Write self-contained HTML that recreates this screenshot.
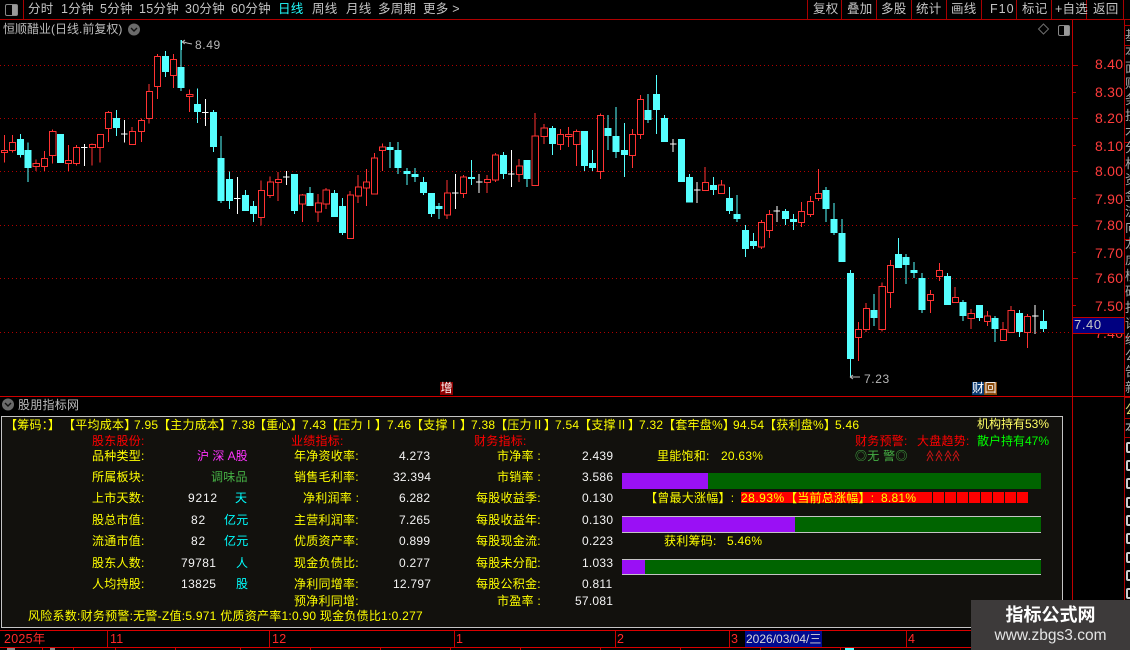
<!DOCTYPE html>
<html lang="zh"><head><meta charset="utf-8"><title>恒顺醋业</title>
<style>
html,body{margin:0;padding:0;background:#000;width:1130px;height:650px;overflow:hidden}
#r{position:relative;width:1130px;height:650px;overflow:hidden;background:#000;font:12px/14px "Liberation Sans","WenQuanYi Zen Hei","Noto Sans CJK SC",sans-serif;color:#c0c0c0}
.t{position:absolute;white-space:nowrap;height:14px;line-height:14px;letter-spacing:.25px}
.b{position:absolute}
.y{color:#ffff00}.red{color:#ff0000}.w{color:#f4f4f4}.c{color:#00ffff}.p{color:#ff33ff}.g{color:#45b045}.pr{color:#ff3c3c;font-size:14px}
.tb{color:#c4c4c4;font-size:12.5px}
.d{position:absolute;left:0;width:1072px;height:1px;background:repeating-linear-gradient(90deg,#b00000 0 1px,transparent 1px 4px)}
.sep{position:absolute;top:0;width:1px;height:19px;background:#a80000}
.tk{position:absolute;left:1073px;height:1px;background:#b00000}
.o{position:absolute;left:1126px;width:7px;height:7px;border:2px solid #ccc;border-radius:2px}
.hl{position:absolute;left:1124px;width:6px;height:1px;background:#b00000}
.vt{position:absolute;width:1px;background:#c80000}
</style></head><body><div id="r">

<!-- grid -->
<div class="d" style="top:65px"></div><div class="d" style="top:118px"></div><div class="d" style="top:171px"></div><div class="d" style="top:225px"></div><div class="d" style="top:278px"></div><div class="d" style="top:332px"></div>

<svg class="b" style="left:0;top:0" width="1130" height="650" viewBox="0 0 3136 1950" preserveAspectRatio="none" shape-rendering="crispEdges">
<g fill="none">
<g id="lw">
<path vector-effect="non-scaling-stroke" stroke="#ff3232" stroke-width="1" d="M12 405V488M34 405V458M100 478V513M123 453V513M146 388V490M190 435V513M212 435V497M256 430V497M278 403V488M301 333V426M367 381V434M392 356V426M414 252V370M437 162V297M481 162V264M526 268V336M725 541V676M750 530V594M772 516V603M839 582V666M883 582V666M905 564V627M972 573V716M994 525V609M1017 507V618M1039 459V582M1061 430V513M1241 540V657M1286 525V594M1352 525V579M1375 459V546M1441 477V546M1485 339V557M1510 372V432M1555 387V450"/>
<path vector-effect="non-scaling-stroke" stroke="#ff3232" stroke-width="1" fill="#000" d="M12 451m-8 0h17V458h-17zM34 427m-8 0h17V452h-17zM100 490m-8 0h17V500h-17zM123 475m-8 0h17V500h-17zM146 394m-8 0h17V467h-17zM190 481m-8 0h17V491h-17zM212 442m-8 0h17V491h-17zM256 433m-8 0h17V442h-17zM278 403m-8 0h17V443h-17zM301 337m-8 0h17V386h-17zM367 394m-8 0h17V434h-17zM392 361m-8 0h17V395h-17zM414 274m-8 0h17V356h-17zM437 169m-8 0h17V260h-17zM481 178m-8 0h17V227h-17zM526 283m-8 0h17V290h-17zM725 571m-8 0h17V653h-17zM750 546m-8 0h17V587h-17zM772 538m-8 0h17V548h-17zM839 585m-8 0h17V612h-17zM883 609m-8 0h17V636h-17zM905 570m-8 0h17V612h-17zM972 585m-8 0h17V716h-17zM994 561m-8 0h17V588h-17zM1017 546m-8 0h17V564h-17zM1039 474m-8 0h17V582h-17zM1061 441m-8 0h17V452h-17zM1241 579m-8 0h17V645h-17zM1286 531m-8 0h17V581h-17zM1352 538m-8 0h17V548h-17zM1375 465m-8 0h17V540h-17zM1441 498m-8 0h17V524h-17zM1485 408m-8 0h17V557h-17zM1510 384m-8 0h17V410h-17zM1555 403m-8 0h17V434h-17z"/>
<path vector-effect="non-scaling-stroke" stroke="#55ffff" stroke-width="1" d="M57 402V472M78 427V546M168 402V489M323 330V408M459 153V231M503 120V273M548 265V369M592 330V456M614 408V609M637 514V627M681 570V633M703 603V666M817 522V642M861 561V618M928 570V651M950 594V705M1083 426V504M1105 426V522M1130 504V555M1152 504V546M1175 531V585M1197 579V651M1219 609V657M1308 480V555M1397 456V537M1463 480V561M1533 378V465"/>
<path vector-effect="non-scaling-stroke" stroke="#55ffff" stroke-width="7" d="M57 417V465M78 450V504M168 402V489M323 354V384M459 168V216M503 201V264M548 312V336M592 336V441M614 474V603M637 537V603M681 585V633M703 618V642M817 522V633M861 579V618M928 579V651M950 618V699M1083 441V450M1105 450V504M1130 513V522M1152 522V531M1175 546V579M1197 579V642M1219 618V627M1308 531V537M1397 465V522M1463 480V537M1533 384V432"/>
<path vector-effect="non-scaling-stroke" stroke="#fff" stroke-width="1" d="M234 432V498M234 442m-9 0h18M345 360V427M345 402m-9 0h18M570 297V378M570 338m-9 0h18M659 531V642M659 595m-9 0h18M795 513V555M795 531m-9 0h18M1264 522V627M1264 579m-9 0h18M1330 522V579M1330 546m-9 0h18M1419 450V561M1419 522m-9 0h18"/>
</g>
<g transform="translate(1568 0)">
<path vector-effect="non-scaling-stroke" stroke="#ff3232" stroke-width="1" d="M10 381V441M32 388V498M98 340V537M187 387V504M209 285V417M389 501V572M434 540V581M545 660V747M567 630V714M656 606V681M681 588V651M703 507V603M814 966V1083M836 909V996M880 847V995M903 780V924M1014 870V939M1039 789V843M1083 861V908M1127 927V987M1172 933V978M1216 966V1022M1238 918V998M1283 942V1044"/>
<path vector-effect="non-scaling-stroke" stroke="#ff3232" stroke-width="1" fill="#000" d="M10 403m-8 0h17V410h-17zM32 394m-8 0h17V434h-17zM98 346m-8 0h17V515h-17zM187 403m-8 0h17V467h-17zM209 298m-8 0h17V404h-17zM389 547m-8 0h17V572h-17zM434 555m-8 0h17V581h-17zM545 667m-8 0h17V741h-17zM567 643m-8 0h17V692h-17zM656 634m-8 0h17V668h-17zM681 604m-8 0h17V644h-17zM703 580m-8 0h17V596h-17zM814 988m-8 0h17V1012h-17zM836 925m-8 0h17V989h-17zM880 859m-8 0h17V989h-17zM903 796m-8 0h17V878h-17zM1014 883m-8 0h17V902h-17zM1039 811m-8 0h17V830h-17zM1083 892m-8 0h17V908h-17zM1127 940m-8 0h17V955h-17zM1172 948m-8 0h17V965h-17zM1216 988m-8 0h17V1022h-17zM1238 931m-8 0h17V998h-17zM1283 949m-8 0h17V998h-17z"/>
<path vector-effect="non-scaling-stroke" stroke="#55ffff" stroke-width="1" d="M54 393V513M76 450V513M120 345V450M142 321V474M165 369V531M231 282V369M254 225V402M276 345V426M323 417V546M345 522V608M412 531V585M456 561V642M478 585V666M501 675V771M523 699V747M612 627V675M634 642V690M725 561V666M747 609V705M769 657V786M792 810V1130M858 882V978M925 714V804M947 762V852M969 786V834M991 819V939M1061 819V915M1105 900V963M1150 915V963M1194 948V1026M1261 930V1011M1328 930V996"/>
<path vector-effect="non-scaling-stroke" stroke="#55ffff" stroke-width="7" d="M54 393V498M76 489V504M120 384V408M142 408V456M165 450V465M231 330V360M254 282V330M276 354V426M323 417V546M345 531V608M412 555V570M456 594V633M478 642V657M501 690V747M523 723V738M612 633V657M634 657V666M725 570V627M747 657V699M769 699V786M792 819V1077M858 930V954M925 762V804M947 771V795M969 810V819M991 834V930M1061 828V915M1105 906V948M1150 915V954M1194 954V987M1261 939V996M1328 963V987"/>
<path vector-effect="non-scaling-stroke" stroke="#fff" stroke-width="1" d="M300 417V456M300 432m-9 0h18M367 546V609M367 570m-9 0h18M588 618V666M588 633m-9 0h18M1305 915V1002M1305 948m-9 0h18"/>
</g>
</g>
</svg>

<!-- toolbar -->
<div class="b" style="left:0;top:19px;width:1130px;height:1px;background:#b00000"></div>
<div class="sep" style="left:23px"></div>
<div class="b" style="left:5px;top:4px;width:11px;height:10px;border:1px solid #888;border-radius:2px;background:linear-gradient(90deg,#000 0 6px,#999 6px)"></div>
<span class="t tb" style="left:28px;top:2px">分时</span>
<span class="t tb" style="left:61px;top:2px">1分钟</span>
<span class="t tb" style="left:100px;top:2px">5分钟</span>
<span class="t tb" style="left:139px;top:2px">15分钟</span>
<span class="t tb" style="left:185px;top:2px">30分钟</span>
<span class="t tb" style="left:231px;top:2px">60分钟</span>
<span class="t tb" style="left:278px;top:2px;color:#22ffff">日线</span>
<span class="t tb" style="left:312px;top:2px">周线</span>
<span class="t tb" style="left:346px;top:2px">月线</span>
<span class="t tb" style="left:378px;top:2px">多周期</span>
<span class="t tb" style="left:423px;top:2px">更多 &gt;</span>
<div class="sep" style="left:807px"></div><div class="sep" style="left:841px"></div><div class="sep" style="left:876px"></div><div class="sep" style="left:911px"></div><div class="sep" style="left:946px"></div><div class="sep" style="left:981px"></div><div class="sep" style="left:1016px"></div><div class="sep" style="left:1051px"></div><div class="sep" style="left:1086px"></div><div class="sep" style="left:1123px"></div>
<span class="t tb" style="left:813px;top:2px">复权</span>
<span class="t tb" style="left:847px;top:2px">叠加</span>
<span class="t tb" style="left:881px;top:2px">多股</span>
<span class="t tb" style="left:916px;top:2px">统计</span>
<span class="t tb" style="left:951px;top:2px">画线</span>
<span class="t tb" style="left:990px;top:2px;letter-spacing:1px">F10</span>
<span class="t tb" style="left:1022px;top:2px">标记</span>
<span class="t tb" style="left:1055px;top:2px">+自选</span>
<span class="t tb" style="left:1093px;top:2px">返回</span>

<!-- title -->
<span class="t" style="left:3px;top:22px;color:#bcbcbc;letter-spacing:0">恒顺醋业(日线.前复权)</span>
<svg class="b" style="left:127px;top:23px" width="14" height="14"><circle cx="7" cy="6.5" r="6" fill="#6a6a6a"/><path d="M4 5l3 3 3-3" stroke="#111" stroke-width="1.4" fill="none"/></svg>
<svg class="b" style="left:1037px;top:22px" width="14" height="14"><path d="M6.5 2l5 5-5 5-5-5z" stroke="#6e6e6e" fill="none"/></svg>
<div class="b" style="left:1058px;top:25px;width:10px;height:9px;border:1px solid #888;border-radius:2px;background:linear-gradient(90deg,#000 0 5px,#999 5px)"></div>

<!-- hi/lo markers -->
<svg class="b" style="left:178px;top:36px" width="20" height="14"><path d="M4 6l3-2M4 6l3 2M4 6h2l3 1 5 1" stroke="#bbb" fill="none"/><path d="M3.500 4V14" stroke="#55ffff"/></svg>
<span class="t" style="left:195px;top:38px;color:#b8b8b8;letter-spacing:.6px">8.49</span>
<svg class="b" style="left:848px;top:372px" width="16" height="10"><path d="M2 5h10M2 5l3-2M2 5l3 2" stroke="#bbb" fill="none"/></svg>
<span class="t" style="left:864px;top:372px;color:#b8b8b8;letter-spacing:.6px">7.23</span>

<span class="b" style="left:440px;top:382px;width:13px;height:13px;background:#8c0000;color:#fff;font-size:12px;line-height:13px;text-align:center">增</span>
<span class="b" style="left:972px;top:382px;width:12px;height:13px;background:#0a3a70;color:#fff;font-size:12px;line-height:13px;text-align:center">财</span>
<span class="b" style="left:984px;top:382px;width:13px;height:13px;background:#8a4a0a;color:#fff;font-size:12px;line-height:13px;text-align:center">回</span>

<!-- axis -->
<div class="b" style="left:1072px;top:20px;width:1px;height:630px;background:#c00000"></div>
<div class="b" style="left:1124px;top:20px;width:1px;height:630px;background:#b00000"></div>
<div class="tk" style="top:65px;width:5px"></div><div class="tk" style="top:92px;width:3px"></div><div class="tk" style="top:118px;width:5px"></div><div class="tk" style="top:145px;width:3px"></div><div class="tk" style="top:171px;width:5px"></div><div class="tk" style="top:198px;width:3px"></div><div class="tk" style="top:225px;width:5px"></div><div class="tk" style="top:252px;width:3px"></div><div class="tk" style="top:278px;width:5px"></div><div class="tk" style="top:305px;width:3px"></div>
<span class="t pr" style="left:1095px;top:57px">8.40</span>
<span class="t pr" style="left:1095px;top:85px">8.30</span>
<span class="t pr" style="left:1095px;top:111px">8.20</span>
<span class="t pr" style="left:1095px;top:139px">8.10</span>
<span class="t pr" style="left:1095px;top:164px">8.00</span>
<span class="t pr" style="left:1095px;top:192px">7.90</span>
<span class="t pr" style="left:1095px;top:218px">7.80</span>
<span class="t pr" style="left:1095px;top:246px">7.70</span>
<span class="t pr" style="left:1095px;top:271px">7.60</span>
<span class="t pr" style="left:1095px;top:299px">7.50</span>
<span class="t pr" style="left:1095px;top:326px">7.40</span>
<div class="b" style="left:1073px;top:317px;width:51px;height:15px;background:#000080;border-top:1px solid #c00000;border-bottom:1px solid #c00000"></div>
<span class="t" style="left:1074px;top:318px;color:#c8c8c8;font-size:13px;letter-spacing:.6px">7.40</span>

<!-- right strip -->
<div class="hl" style="top:25px"></div><div class="hl" style="top:45px"></div><div class="hl" style="top:142px"></div><div class="hl" style="top:239px"></div><div class="hl" style="top:336px"></div><div class="hl" style="top:397px"></div><div class="hl" style="top:418px"></div><div class="hl" style="top:437px"></div>
<div class="b" style="left:1125px;top:28px;width:5px;height:368px;overflow:hidden;color:#a8a8a8;font-size:13px;line-height:16px;white-space:pre-line">基
本
面
财
务
技
术
分
析
资
金
流
向
龙
虎
榜
研
报
评
级
公
告
新
闻
股
东
分
红</div>
<span class="b" style="left:1125px;top:403px;width:5px;height:14px;overflow:hidden;color:#e0e070;font-size:13px;line-height:14px">公</span>
<span class="b" style="left:1125px;top:420px;width:5px;height:16px;overflow:hidden;color:#c8c8c8;font-size:13px;line-height:16px">本</span>
<div class="o" style="top:442px"></div><div class="o" style="top:460px"></div><div class="o" style="top:478px"></div><div class="o" style="top:497px"></div><div class="o" style="top:515px"></div><div class="o" style="top:533px"></div><div class="o" style="top:552px"></div><div class="o" style="top:570px"></div><div class="o" style="top:588px"></div>

<!-- panel -->
<div class="b" style="left:0;top:396px;width:1130px;height:1px;background:#d00000"></div>
<svg class="b" style="left:1px;top:398px" width="14" height="14"><circle cx="7" cy="6.500" r="6" fill="#6a6a6a"/><path d="M4 5l3 3 3-3" stroke="#111" stroke-width="1.4" fill="none"/></svg>
<span class="t" style="left:18px;top:398px;color:#bcbcbc">股朋指标网</span>
<div class="b" style="left:1px;top:416px;width:1060px;height:210px;background:#12110d;border:1px solid #c4c4c4"></div>

<span class="t y" style="left:5px;top:418px">【筹码：】</span>
<span class="t y" style="left:63px;top:418px">【平均成本】</span><span class="t y" style="left:134px;top:418px">7.95</span>
<span class="t y" style="left:158px;top:418px">【主力成本】</span><span class="t y" style="left:231px;top:418px">7.38</span>
<span class="t y" style="left:254px;top:418px">【重心】</span><span class="t y" style="left:302px;top:418px">7.43</span>
<span class="t y" style="left:326px;top:418px">【压力Ⅰ】</span><span class="t y" style="left:387px;top:418px">7.46</span>
<span class="t y" style="left:411px;top:418px">【支撑Ⅰ】</span><span class="t y" style="left:471px;top:418px">7.38</span>
<span class="t y" style="left:495px;top:418px">【压力Ⅱ】</span><span class="t y" style="left:555px;top:418px">7.54</span>
<span class="t y" style="left:579px;top:418px">【支撑Ⅱ】</span><span class="t y" style="left:639px;top:418px">7.32</span>
<span class="t y" style="left:663px;top:418px">【套牢盘%】</span><span class="t y" style="left:733px;top:418px">94.54</span>
<span class="t y" style="left:764px;top:418px">【获利盘%】</span><span class="t y" style="left:835px;top:418px">5.46</span>

<!-- col 1 -->
<span class="t red" style="left:92px;top:434px">股东股份:</span>
<span class="t y" style="left:92px;top:449px">品种类型:</span><span class="t p" style="left:197px;top:449px;letter-spacing:0">沪 深 A股</span>
<span class="t y" style="left:92px;top:470px">所属板块:</span><span class="t g" style="left:211px;top:470px">调味品</span>
<span class="t y" style="left:92px;top:491px">上市天数:</span><span class="t w" style="left:188px;top:491px;letter-spacing:.8px">9212</span><span class="t c" style="left:235px;top:491px">天</span>
<span class="t y" style="left:92px;top:513px">股总市值:</span><span class="t w" style="left:191px;top:513px;letter-spacing:.8px">82</span><span class="t c" style="left:224px;top:513px">亿元</span>
<span class="t y" style="left:92px;top:534px">流通市值:</span><span class="t w" style="left:191px;top:534px;letter-spacing:.8px">82</span><span class="t c" style="left:224px;top:534px">亿元</span>
<span class="t y" style="left:92px;top:556px">股东人数:</span><span class="t w" style="left:181px;top:556px;letter-spacing:.4px">79781</span><span class="t c" style="left:236px;top:556px">人</span>
<span class="t y" style="left:92px;top:577px">人均持股:</span><span class="t w" style="left:181px;top:577px;letter-spacing:.4px">13825</span><span class="t c" style="left:236px;top:577px">股</span>

<!-- col 2 -->
<span class="t red" style="left:291px;top:434px">业绩指标:</span>
<span class="t y" style="left:294px;top:449px">年净资收率:</span><span class="t w" style="left:399px;top:449px">4.273</span>
<span class="t y" style="left:294px;top:470px">销售毛利率:</span><span class="t w" style="left:393px;top:470px;">32.394</span>
<span class="t y" style="left:303px;top:491px">净利润率 :</span><span class="t w" style="left:399px;top:491px">6.282</span>
<span class="t y" style="left:294px;top:513px">主营利润率:</span><span class="t w" style="left:399px;top:513px">7.265</span>
<span class="t y" style="left:294px;top:534px">优质资产率:</span><span class="t w" style="left:399px;top:534px">0.899</span>
<span class="t y" style="left:294px;top:556px">现金负债比:</span><span class="t w" style="left:399px;top:556px">0.277</span>
<span class="t y" style="left:294px;top:577px">净利同增率:</span><span class="t w" style="left:393px;top:577px">12.797</span>
<span class="t y" style="left:294px;top:594px">预净利同增:</span>

<!-- col 3 -->
<span class="t red" style="left:474px;top:434px">财务指标:</span>
<span class="t y" style="left:497px;top:449px">市净率 :</span><span class="t w" style="left:582px;top:449px">2.439</span>
<span class="t y" style="left:497px;top:470px">市销率 :</span><span class="t w" style="left:582px;top:470px">3.586</span>
<span class="t y" style="left:476px;top:491px">每股收益季:</span><span class="t w" style="left:582px;top:491px">0.130</span>
<span class="t y" style="left:476px;top:513px">每股收益年:</span><span class="t w" style="left:582px;top:513px">0.130</span>
<span class="t y" style="left:476px;top:534px">每股现金流:</span><span class="t w" style="left:582px;top:534px">0.223</span>
<span class="t y" style="left:476px;top:556px">每股未分配:</span><span class="t w" style="left:582px;top:556px">1.033</span>
<span class="t y" style="left:476px;top:577px">每股公积金:</span><span class="t w" style="left:582px;top:577px">0.811</span>
<span class="t y" style="left:497px;top:594px">市盈率 :</span><span class="t w" style="left:575px;top:594px">57.081</span>

<span class="t y" style="left:28px;top:609px">风险系数:财务预警:无警-Z值:5.971 优质资产率1:0.90 现金负债比1:0.277</span>

<!-- right of panel -->
<span class="t y" style="left:657px;top:449px">里能饱和:</span><span class="t y" style="left:721px;top:449px">20.63%</span>
<span class="t" style="left:977px;top:417px;color:#ffff66;letter-spacing:0">机构持有53%</span>
<span class="t" style="left:977px;top:434px;color:#00ff00;letter-spacing:0">散户持有47%</span>
<span class="t red" style="left:855px;top:434px">财务预警:</span>
<span class="t red" style="left:917px;top:434px">大盘趋势:</span>
<span class="t g" style="left:855px;top:449px">◎无 警◎</span>
<svg class="b" style="left:926px;top:449px" width="36" height="13"><path d="M1 7l3-5 3 5M1 12l3-6 3 6M10 7l3-5 3 5M10 12l3-6 3 6M19 7l3-5 3 5M19 12l3-6 3 6M27 7l3-5 3 5M27 12l3-6 3 6" stroke="#c81414" fill="none"/></svg>

<!-- bars -->
<div class="b" style="left:622px;top:473px;width:419px;height:16px;background:#006400"></div>
<div class="b" style="left:622px;top:473px;width:86px;height:16px;background:#9a10f5"></div>

<div class="b" style="left:741px;top:492px;width:180px;height:11px;background:#ff0000"></div>
<div class="b" style="left:921px;top:492px;width:11px;height:11px;background:#f00"></div><div class="b" style="left:933px;top:492px;width:11px;height:11px;background:#f00"></div><div class="b" style="left:945px;top:492px;width:11px;height:11px;background:#f00"></div><div class="b" style="left:957px;top:492px;width:11px;height:11px;background:#f00"></div><div class="b" style="left:969px;top:492px;width:11px;height:11px;background:#f00"></div><div class="b" style="left:981px;top:492px;width:11px;height:11px;background:#f00"></div><div class="b" style="left:993px;top:492px;width:11px;height:11px;background:#f00"></div><div class="b" style="left:1005px;top:492px;width:11px;height:11px;background:#f00"></div><div class="b" style="left:1017px;top:492px;width:11px;height:11px;background:#f00"></div>
<span class="t y" style="left:645px;top:491px">【曾最大涨幅】:</span>
<span class="t y" style="left:741px;top:491px;letter-spacing:.5px">28.93%</span>
<span class="t y" style="left:785px;top:491px">【当前总涨幅】:</span>
<span class="t y" style="left:881px;top:491px">8.81%</span>

<div class="b" style="left:622px;top:516px;width:419px;height:15px;background:#006400;border-top:1px solid #c4c4c4;border-bottom:1px solid #c4c4c4"></div>
<div class="b" style="left:622px;top:517px;width:173px;height:15px;background:#9a10f5"></div>
<span class="t y" style="left:664px;top:534px">获利筹码:</span><span class="t y" style="left:727px;top:534px">5.46%</span>
<div class="b" style="left:622px;top:559px;width:419px;height:14px;background:#006400;border-top:1px solid #c4c4c4;border-bottom:1px solid #c4c4c4"></div>
<div class="b" style="left:622px;top:560px;width:23px;height:14px;background:#9a10f5"></div>

<!-- time axis -->
<div class="b" style="left:0;top:630px;width:1130px;height:1px;background:#d80000"></div>
<div class="b" style="left:0;top:647px;width:1130px;height:1px;background:#d80000"></div>
<div class="vt" style="left:107px;top:631px;height:16px"></div><div class="vt" style="left:269px;top:631px;height:16px"></div><div class="vt" style="left:454px;top:631px;height:16px"></div><div class="vt" style="left:615px;top:631px;height:16px"></div><div class="vt" style="left:729px;top:631px;height:16px"></div><div class="vt" style="left:906px;top:631px;height:16px"></div>
<span class="t pr" style="left:4px;top:632px;font-size:12.5px;color:#ff2828">2025年</span>
<span class="t pr" style="left:110px;top:632px;font-size:12.5px;color:#ff2828">11</span>
<span class="t pr" style="left:272px;top:632px;font-size:12.5px;color:#ff2828">12</span>
<span class="t pr" style="left:456px;top:632px;font-size:12.5px;color:#ff2828">1</span>
<span class="t pr" style="left:617px;top:632px;font-size:12.5px;color:#ff2828">2</span>
<span class="t pr" style="left:731px;top:632px;font-size:12.5px;color:#ff2828">3</span>
<span class="t pr" style="left:908px;top:632px;font-size:12.5px;color:#ff2828">4</span>
<div class="b" style="left:745px;top:631px;width:77px;height:16px;background:#000a90"></div>
<span class="t" style="left:746px;top:632px;color:#d8d8d8;letter-spacing:0">2026/03/04/三</span>
<div class="vt" style="left:42px;top:648px;height:2px"></div><div class="vt" style="left:73px;top:648px;height:2px"></div><div class="vt" style="left:115px;top:648px;height:2px"></div><div class="vt" style="left:175px;top:648px;height:2px"></div><div class="vt" style="left:240px;top:648px;height:2px"></div><div class="vt" style="left:310px;top:648px;height:2px"></div><div class="vt" style="left:380px;top:648px;height:2px"></div><div class="vt" style="left:450px;top:648px;height:2px"></div><div class="vt" style="left:520px;top:648px;height:2px"></div><div class="vt" style="left:600px;top:648px;height:2px"></div><div class="vt" style="left:680px;top:648px;height:2px"></div><div class="vt" style="left:760px;top:648px;height:2px"></div><div class="vt" style="left:840px;top:648px;height:2px"></div>
<div class="b" style="left:7px;top:648px;width:8px;height:2px;background:#888"></div>
<div class="b" style="left:50px;top:648px;width:5px;height:2px;background:#888"></div>
<div class="b" style="left:845px;top:648px;width:9px;height:2px;background:#55ffff"></div>

<!-- watermark -->
<div class="b" style="left:971px;top:600px;width:159px;height:50px;background:#3d3a3a"></div>
<span class="b" style="left:971px;top:604px;width:159px;text-align:center;color:#fff;font-size:18px;line-height:22px;font-weight:bold;white-space:nowrap">指标公式网</span>
<span class="b" style="left:971px;top:627px;width:159px;text-align:center;color:#e4e4e4;font-size:15.5px;line-height:18px;white-space:nowrap">www.zbgs3.com</span>

</div></body></html>
